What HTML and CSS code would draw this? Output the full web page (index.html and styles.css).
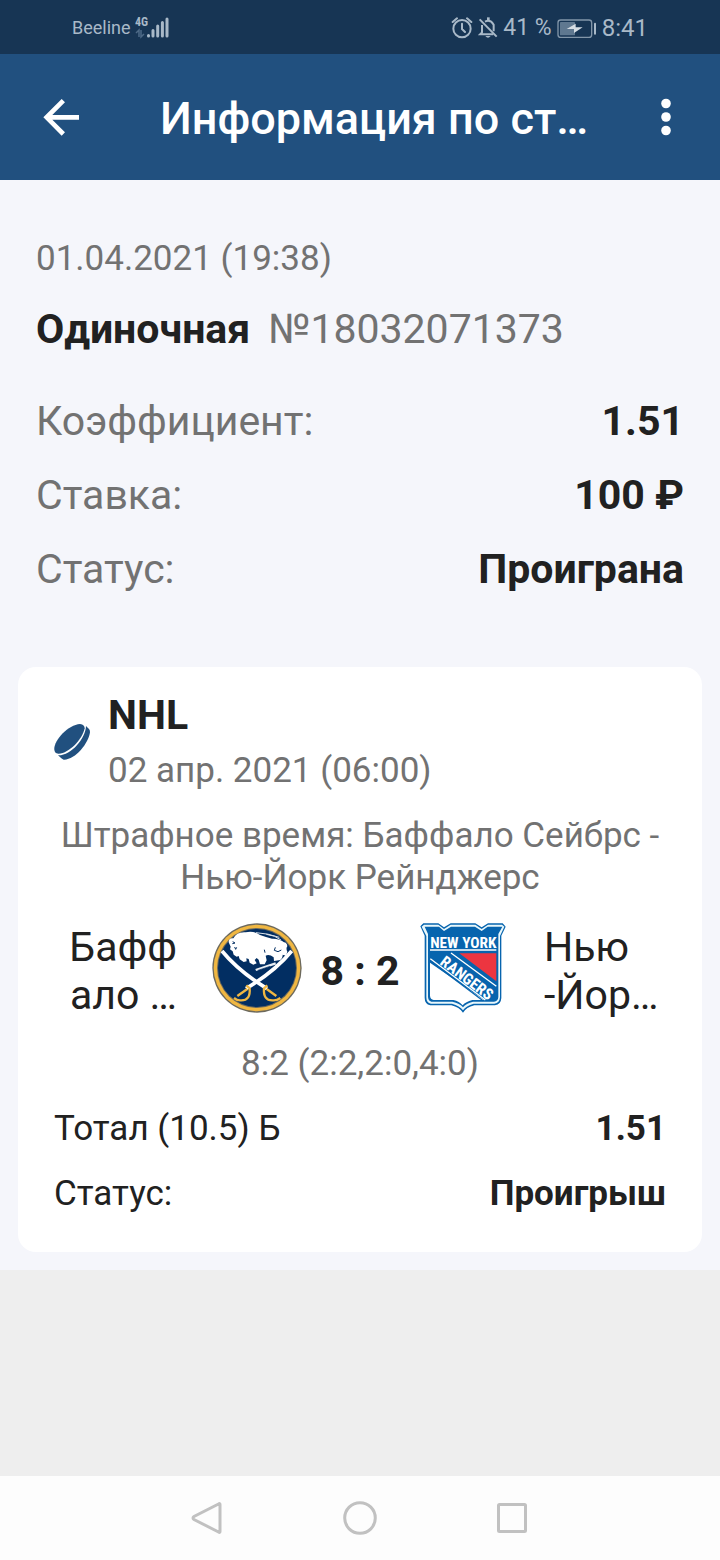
FILE: index.html
```html
<!DOCTYPE html>
<html lang="ru">
<head>
<meta charset="utf-8">
<meta name="viewport" content="width=device-width, initial-scale=1">
<title>Информация по ставке</title>
<link rel="stylesheet" href="styles.css">
</head>
<body>
<div class="status-bar">
  <div class="status-left">
    <span class="carrier">Beeline</span>
    <svg class="signal" viewBox="0 0 36 24" aria-hidden="true">
      <text class="signal-label" x="0" y="10">4G</text>
      <path d="M1 17l3-3v7M6 14v7l3-3" fill="none" stroke="#4e6a86" stroke-width="1.5"/>
      <path d="M13.5 19.5v.5M18 14.500v5.500M22.700 10v10M27.400 6.500v13.500M32 3v17" stroke="#a9b9c8" stroke-width="3" stroke-linecap="round"/>
    </svg>
  </div>
  <div class="status-right">
    <svg class="alarm" viewBox="33 48 66 66" aria-hidden="true">
      <g fill="none" stroke="#a9b9c8" stroke-width="6" stroke-linecap="round">
        <circle cx="66" cy="83" r="26"/><path d="M66 68v16l9 9M38 63l13-11M94 63L81 52"/>
      </g>
    </svg>
    <svg class="bell" viewBox="120 48 60 66" aria-hidden="true">
      <g fill="none" stroke="#a9b9c8" stroke-width="6">
        <path d="M125 55l51 52"/><path d="M132 72v22l-6 6h40M141 62q16-8 26 9v20"/><path d="M151 49v9" stroke-width="8"/>
      </g>
      <path d="M142 105h16q-8 11-16 0z" fill="#a9b9c8"/>
    </svg>
    <span class="percent">41 %</span>
    <svg class="battery" viewBox="356 51 120 63" aria-hidden="true">
      <rect x="359" y="57" width="101" height="52" rx="8" fill="none" stroke="#8296a9" stroke-width="4"/>
      <rect x="365" y="63" width="45" height="40" rx="2" fill="#5f7890"/>
      <path d="M385 84l27-16v11h21l-26 17v-12z" fill="#d5dde4"/>
      <path d="M470 68v30" stroke="#a9b9c8" stroke-width="6" stroke-linecap="round"/>
    </svg>
    <span>8:41</span>
  </div>
</div>

<header class="app-bar">
  <button class="icon-button" type="button" aria-label="Назад">
    <svg class="back-icon" viewBox="129 111 108 111" aria-hidden="true"><path d="M237 166H138M190 116l-50 50 50 50" fill="none" stroke="#fff" stroke-width="14"/></svg>
  </button>
  <h1 class="title">Информация по ст…</h1>
  <button class="icon-button more" type="button" aria-label="Меню">
    <svg class="more-icon" viewBox="0 0 10 38" aria-hidden="true"><g fill="#fff"><circle cx="5" cy="5.500" r="4.800"/><circle cx="5" cy="19" r="4.800"/><circle cx="5" cy="32.500" r="4.800"/></g></svg>
  </button>
</header>

<main class="content">
  <section class="summary">
    <p class="placed muted">01.04.2021 (19:38)</p>
    <p class="bet large"><strong>Одиночная</strong><span class="muted">№18032071373</span></p>
    <dl class="facts large">
      <div class="row"><dt class="muted">Коэффициент:</dt><dd>1.51</dd></div>
      <div class="row"><dt class="muted">Ставка:</dt><dd>100 ₽</dd></div>
      <div class="row"><dt class="muted">Статус:</dt><dd>Проиграна</dd></div>
    </dl>
  </section>

  <article class="card">
    <div class="league">
      <svg class="puck" viewBox="132 192 108 108" aria-hidden="true">
        <path d="M133 269C130 242 174 195 210 192C220 193 224 198 224 205C218 237 176 282 145 281C136 280 134 276 133 269Z" fill="#21507f"/>
        <path d="M228 198L237 207Q240 210 240 217C236 250 195 301 161 299Q157 298 154 295L144 286C182 288 227 236 228 198Z" fill="#21507f"/>
      </svg>
      <div class="league-text">
        <h2 class="league-name large">NHL</h2>
        <p class="muted">02 апр. 2021 (06:00)</p>
      </div>
    </div>
    <p class="event muted">Штрафное время: Баффало Сейбрс - Нью-Йорк Рейнджерс</p>
    <div class="match large">
      <p class="team home">Бафф<br>ало …</p>
      <svg class="logo" viewBox="24 26 270 270" role="img" aria-label="Buffalo Sabres">
        <circle cx="159" cy="161" r="134" fill="#6c695d"/>
        <circle cx="159" cy="161" r="130" fill="#f0b742"/>
        <circle cx="159" cy="161" r="120" fill="#6c695d"/>
        <circle cx="159" cy="161" r="117" fill="#022e62"/>
        <path d="M74 84Q74 70 88 72Q98 52 125 54Q148 48 168 62Q186 68 204 73Q226 72 240 84Q249 85 250 96Q245 102 250 112L246 124L236 121Q237 130 229 137L210 140L209 129Q196 119 185 124L188 138L182 150H168L164 136L158 131L152 137L158 147L148 151L137 145L134 134L127 132L128 141L119 143L107 135L104 125L98 127L89 121L86 111L78 105L80 97Z" fill="#fff"/>
        <path d="M86 82l7 4-8 2M92 98l3 7 3-6M181 106l2 9M214 99l-3 9 11 4 10-5" fill="none" stroke="#022e62" stroke-width="3"/>
        <path d="M156 55q36 2 70 14M187 60q27 3 44 17" fill="none" stroke="#dbe2e9" stroke-width="3"/>
        <path d="M155 167L215 147" fill="none" stroke="#e8edf2" stroke-width="7"/>
        <path d="M162 168l36-12" fill="none" stroke="#022e62" stroke-width="2"/>
        <path d="M54 110Q103 170 189 223M263 110Q214 170 126 223" fill="none" stroke="#fff" stroke-width="11"/>
        <g fill="none" stroke="#f0b742" stroke-width="7" stroke-linejoin="round">
          <path d="M127 213L137 222Q140 258 112 258Q101 260 90 251"/>
          <path d="M190 213L180 222Q177 258 205 258Q217 260 229 251"/>
          <path d="M130 224L100 245M188 224l29 21" stroke-width="7"/>
        </g>
      </svg>
      <p class="score">8 : 2</p>
      <svg class="logo" viewBox="27 27 270 270" role="img" aria-label="New York Rangers">
        <path d="M34 37L43 28H88L105 40L125 28H199L218 40L237 28H281L290 38L277 65V252Q276 271 258 274H196Q172 280 162 296Q151 280 127 274H64Q47 270 47 251V65Z" fill="#0764ae"/>
        <path d="M38 38L45 32H88L105 45L125 32H199L218 45L237 32H279L286 38L273 66V250Q272 267 256 269H194Q171 275 162 289Q152 275 129 269H66Q52 267 52 250V66Z" fill="#e8f7fb"/>
        <path d="M47 38H90L105 51L126 38H198L218 51L236 38H280L268 60V249Q267 262 255 263H192Q171 268 162 280Q153 268 130 263H67Q58 261 57 249V60Z" fill="#0764ae"/>
        <path d="M63 108H262" stroke="#fff" stroke-width="5"/>
        <path d="M151 118H262V202Z" fill="#ec3540"/>
        <path d="M63 146L225 258H190Q170 263 161 274Q151 262 133 258H74Q64 256 63 245Z" fill="#fff"/>
        <path d="M64 134L229 258M126 117L262 217" fill="none" stroke="#fff" stroke-width="4"/>
        <path d="M64 141L222 260" fill="none" stroke="#0764ae" stroke-width="4"/>
        <text class="crest-city" x="163" y="101">NEW YORK</text>
        <text class="crest-name" transform="translate(164 205) rotate(37)">RANGERS</text>
      </svg>
      <p class="team away">Нью<br>-Йор…</p>
    </div>
    <p class="periods muted">8:2 (2:2,2:0,4:0)</p>
    <dl class="outcome">
      <div class="row"><dt>Тотал (10.5) Б</dt><dd>1.51</dd></div>
      <div class="row"><dt>Статус:</dt><dd>Проигрыш</dd></div>
    </dl>
  </article>
</main>

<nav class="system-nav" aria-label="Система">
  <button class="nav-button" type="button" aria-label="Назад"><svg viewBox="0 0 36 36"><path d="M30 4.500V31.500Q30 33 28.500 32L4 19.500Q2 18 4 16.500L28.500 4Q30 3 30 4.500Z"/></svg></button>
  <button class="nav-button" type="button" aria-label="Домой"><svg viewBox="0 0 36 36"><circle cx="18" cy="18" r="15.300"/></svg></button>
  <button class="nav-button" type="button" aria-label="Недавние"><svg viewBox="0 0 36 36"><rect x="4.500" y="4.500" width="27" height="27" rx="1"/></svg></button>
</nav>
</body>
</html>
```
FILE: styles.css
```css
* { box-sizing: border-box; }

body {
  margin: 0;
  min-height: 100vh;
  display: flex;
  flex-direction: column;
  background: #eeeeee;
  color: #212121;
  font-family: Roboto, "Noto Sans", sans-serif;
  font-size: 35px;
  line-height: 42px;
}

h1, h2, p, dl, dd { margin: 0; }
button { border: 0; padding: 0; background: none; }
svg { display: block; flex: none; }

.muted { color: #727272; }
.large { font-size: 41px; line-height: 48px; }

.status-bar {
  display: flex;
  justify-content: space-between;
  align-items: center;
  height: 54px;
  padding: 2px 72px 0;
  background: #173554;
  color: #a9b9c8;
  font-size: 24px;
  line-height: 28px;
}
.status-left, .status-right { display: flex; align-items: center; }
.status-left { gap: 4px; }
.status-right { gap: 5px; }
.carrier { font-size: 18px; }
.percent { font-size: 23px; }
.signal { width: 36px; height: 24px; }
.signal-label { font: bold 12px "Roboto Condensed", "Liberation Sans Narrow", Roboto, sans-serif; fill: #a9b9c8; }
.alarm { width: 22px; height: 22px; }
.bell { width: 20px; height: 22px; }
.battery { width: 40px; height: 21px; }

.app-bar {
  display: flex;
  align-items: center;
  height: 126px;
  padding: 0 36px;
  background: #21507f;
  color: #fff;
}
.icon-button { display: flex; align-items: center; justify-content: center; width: 50px; height: 72px; }
.more { width: 36px; }
.back-icon { width: 36px; height: 37px; }
.more-icon { width: 10px; height: 38px; }
.title {
  flex: 1;
  padding: 4px 0 0 74px;
  font-size: 45px;
  line-height: 52px;
  font-weight: 500;
  white-space: nowrap;
}

.content { padding: 58px 18px 18px; background: #f5f6fb; }
.summary { padding: 0 18px; }
.bet { display: flex; gap: 18px; margin-top: 25px; }
.facts { display: grid; gap: 26px; margin-top: 44px; }
.row { display: flex; justify-content: space-between; }
.row dd { font-weight: 700; }

.card { margin-top: 74px; padding: 24px 36px 37px; border-radius: 18px; background: #fff; }
.league { display: flex; align-items: center; gap: 18px; }
.league-name { margin-bottom: 11px; font-weight: 700; }
.puck { width: 36px; height: 36px; }
.event { margin-top: 23px; text-align: center; }
.match {
  display: grid;
  grid-template-columns: 1fr 90px 116px 90px 1fr;
  margin-top: 24px;
}
.home { padding-right: 35px; text-align: right; }
.away { padding-left: 36px; }
.score { align-self: center; text-align: center; font-weight: 700; }
.logo { width: 90px; height: 90px; }
.crest-city { font: bold 46px "Roboto Condensed", "Liberation Sans Narrow", Roboto, sans-serif; fill: #fff; text-anchor: middle; }
.crest-name { font: bold 47px "Roboto Condensed", "Liberation Sans Narrow", Roboto, sans-serif; fill: #fff; text-anchor: middle; }
.periods { margin-top: 24px; text-align: center; }
.outcome { display: grid; gap: 23px; margin-top: 23px; }

.system-nav {
  display: flex;
  justify-content: center;
  align-items: center;
  gap: 116px;
  height: 84px;
  margin-top: auto;
  background: #fdfdfd;
}
.nav-button svg { width: 36px; height: 36px; fill: none; stroke: #c1c1c1; stroke-width: 3; }
```
